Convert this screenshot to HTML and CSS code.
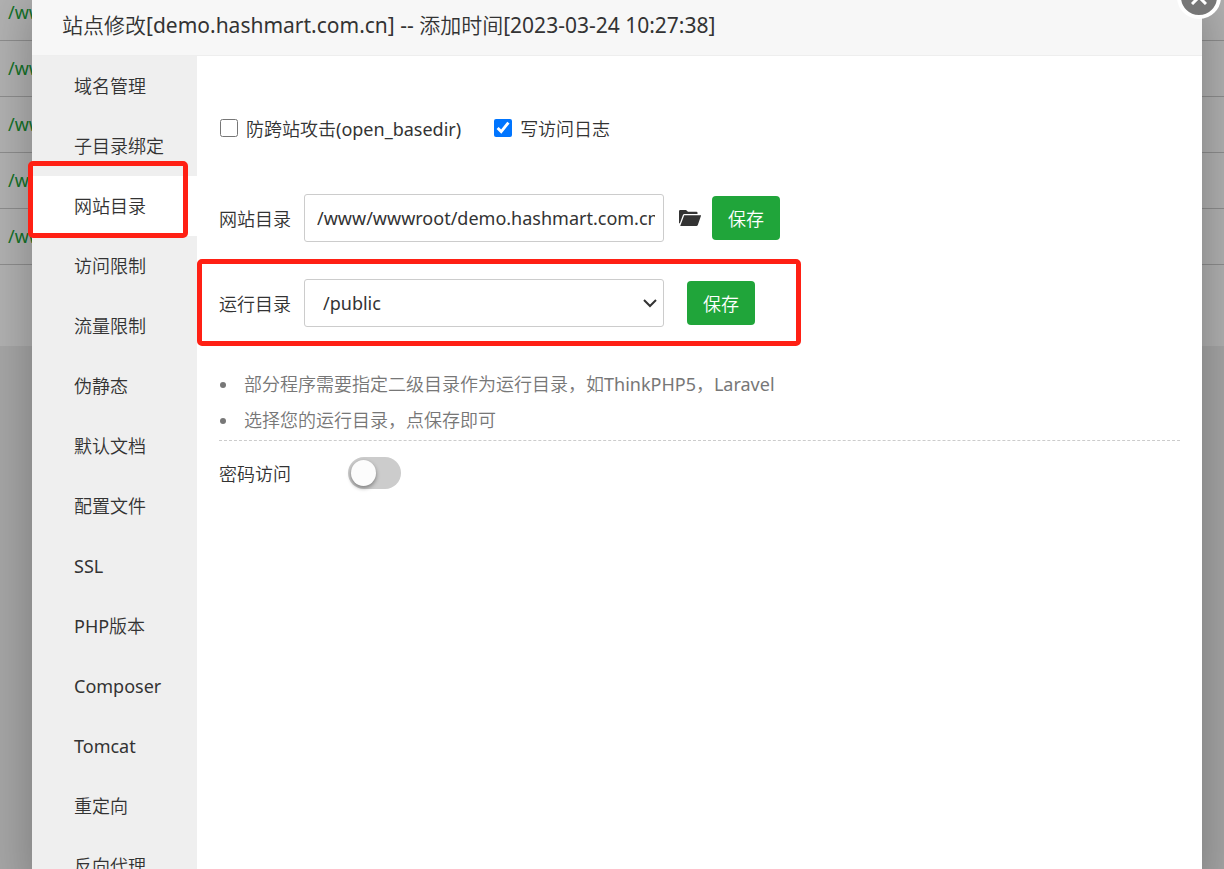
FILE: index.html
```
<!DOCTYPE html>
<html lang="zh-CN">
<head>
  <title>站点修改</title>
  <meta charset="utf-8">
  <link rel="stylesheet" href="styles.css">
</head>
<body>
  <div class="site-list">
    <table class="site-table">
      <tr><td><a href="#">/www</a></td></tr>
      <tr><td><a href="#">/www</a></td></tr>
      <tr><td><a href="#">/www</a></td></tr>
      <tr><td><a href="#">/www</a></td></tr>
      <tr><td><a href="#">/www</a></td></tr>
    </table>
  </div>

  <div class="overlay">
    <div class="modal">
      <h1 class="modal-title">站点修改[demo.hashmart.com.cn] -- 添加时间[2023-03-24 10:27:38]</h1>
      <button class="close-btn" aria-label="关闭">
        <svg width="16" height="16" viewBox="0 0 16 16"><path d="M1 1l14 14M15 1l-14 14" stroke="#fff" stroke-width="3" fill="none"/></svg>
      </button>

      <div class="modal-body">
        <nav class="menu">
          <a href="#">域名管理</a>
          <a href="#">子目录绑定</a>
          <a href="#" class="active">网站目录</a>
          <a href="#">访问限制</a>
          <a href="#">流量限制</a>
          <a href="#">伪静态</a>
          <a href="#">默认文档</a>
          <a href="#">配置文件</a>
          <a href="#">SSL</a>
          <a href="#">PHP版本</a>
          <a href="#">Composer</a>
          <a href="#">Tomcat</a>
          <a href="#">重定向</a>
          <a href="#">反向代理</a>
        </nav>

        <div class="content">
          <div class="checks">
            <label><input type="checkbox" id="open-basedir">防跨站攻击(open_basedir)</label>
            <label><input type="checkbox" id="access-log" checked>写访问日志</label>
          </div>

          <div class="row">
            <label for="site-path">网站目录</label>
            <input type="text" class="field" id="site-path" value="/www/wwwroot/demo.hashmart.com.cn">
            <button class="folder-btn" aria-label="选择目录">
              <svg width="22" height="18" viewBox="0 0 22 18"><path d="M0 14V2.200Q0 1 1.200 1H7l2 1.800h8.500q1 0 1 1V5H5.500Q4.300 5 3.900 6L.8 14.500zM5.200 6.300H22.200L18.800 16q-.4 1-1.400 1H1.200z" fill="#333"/></svg>
            </button>
            <button class="save-btn">保存</button>
          </div>

          <div class="row marked">
            <label for="run-path">运行目录</label>
            <div class="select-wrap">
              <select class="field" id="run-path">
                <option>/public</option>
              </select>
              <svg class="arrow" width="14" height="9" viewBox="0 0 14 9"><path d="M1 1l6 6 6-6" stroke="#333" stroke-width="2" fill="none"/></svg>
            </div>
            <button class="save-btn">保存</button>
          </div>

          <ul class="tips">
            <li>部分程序需要指定二级目录作为运行目录，如ThinkPHP5，Laravel</li>
            <li>选择您的运行目录，点保存即可</li>
          </ul>

          <div class="password">
            <label for="pwd-access">密码访问</label>
            <input type="checkbox" class="switch" id="pwd-access">
          </div>
        </div>
      </div>
    </div>
  </div>
</body>
</html>
```
FILE: styles.css
```
:root {
  --text-color: #333333;
  --muted-color: #777777;
  --border-color: #cccccc;
  --green: #20a53a;
  --mark-color: #ff2014;
}

* {
  box-sizing: border-box;
}

body {
  margin: 0;
  height: 100vh;
  overflow: hidden;
  background: #f0f0f0;
  color: var(--text-color);
  font-family: "Noto Sans", "Noto Sans CJK SC DemiLight", "Noto Sans CJK SC Light", "Noto Sans CJK SC", sans-serif;
  font-size: 18px;
}

input, select, button {
  font: inherit;
  color: inherit;
}

a {
  color: inherit;
  text-decoration: none;
}

button {
  border: none;
  padding: 0;
  cursor: pointer;
}

svg {
  display: block;
}

/* Site list under the dialog */
.site-list {
  background: #ffffff;
  padding-bottom: 81px;
}

.site-table {
  width: 100%;
  margin-top: -16px;
  border-collapse: collapse;
}

.site-table td {
  height: 56px;
  padding: 0 8px;
  border-bottom: 1px solid var(--border-color);
  color: var(--green);
}

.overlay {
  position: absolute;
  inset: 0;
  overflow: hidden;
  background: rgba(0, 0, 0, 0.3);
}

/* Dialog */
.modal {
  position: relative;
  min-height: 100%;
  margin: 0 22px 0 32px;
  background: #ffffff;
  box-shadow: 1px 1px 50px rgba(0, 0, 0, 0.3);
}

.modal-title {
  margin: 0;
  padding: 0 30px;
  height: 56px;
  line-height: 50px;
  font-size: 21px;
  font-weight: 400;
  background: #f7f7f7;
  border-bottom: 1px solid #eeeeee;
}

.close-btn {
  position: absolute;
  top: -25px;
  right: -19px;
  width: 44px;
  height: 44px;
  display: flex;
  align-items: center;
  justify-content: center;
  background: #777777;
  border: 4px solid #ffffff;
  border-radius: 50%;
}

.modal-body {
  display: flex;
}

.menu {
  width: 165px;
  flex-shrink: 0;
  background: #efefef;
}

.menu a {
  display: block;
  position: relative;
  height: 60px;
  line-height: 60px;
  padding-left: 42px;
}

.menu .active {
  background: #ffffff;
}

.menu .active::after,
.marked::after {
  content: "";
  position: absolute;
  border: 5px solid var(--mark-color);
  border-radius: 5px;
  pointer-events: none;
}

.menu .active::after {
  inset: -15px 9px -2px -4px;
}

.content {
  flex: 1;
  padding: 56px 22px;
}

.checks {
  display: flex;
  gap: 32px;
  height: 32px;
  margin-bottom: 50px;
}

.checks label {
  display: flex;
  align-items: center;
}

.checks input {
  width: 18px;
  height: 18px;
  margin: 0 8px 0 1px;
  accent-color: #0075ff;
}

.row {
  display: flex;
  align-items: center;
  position: relative;
  width: fit-content;
  margin-bottom: 37px;
}

.row label {
  margin-right: 13px;
}

.field {
  display: block;
  width: 360px;
  height: 48px;
  padding: 0 8px 0 12px;
  border: 1px solid var(--border-color);
  border-radius: 3px;
  background: #ffffff;
}

.select-wrap {
  position: relative;
  margin-right: 23px;
}

.select-wrap .field {
  appearance: none;
  padding-left: 18px;
}

.arrow {
  position: absolute;
  top: 20px;
  right: 7px;
  pointer-events: none;
}

.folder-btn {
  margin: 0 11px 0 15px;
  background: none;
}

.save-btn {
  width: 68px;
  height: 44px;
  background: var(--green);
  color: #ffffff;
  border-radius: 4px;
}

.marked::after {
  inset: -20px -46px -19px -22px;
}

.tips {
  margin: 0;
  padding: 2px 0 2px 20px;
  line-height: 36px;
  color: var(--muted-color);
  border-bottom: 1px dashed var(--border-color);
}

.tips li {
  padding-left: 5px;
}

.password {
  display: flex;
  align-items: center;
  gap: 57px;
  margin-top: 16px;
}

/* Toggle switch */
.switch {
  appearance: none;
  width: 53px;
  height: 32px;
  margin: 0;
  padding: 3px;
  border-radius: 16px;
  background: var(--border-color);
  cursor: pointer;
}

.switch::before {
  content: "";
  display: block;
  width: 25px;
  height: 26px;
  border-radius: 50%;
  background: #fcfcfc;
  box-shadow: 0 2px 4px rgba(0, 0, 0, 0.4);
}

.switch:checked {
  background: var(--green);
}

.switch:checked::before {
  margin-left: auto;
}
```
